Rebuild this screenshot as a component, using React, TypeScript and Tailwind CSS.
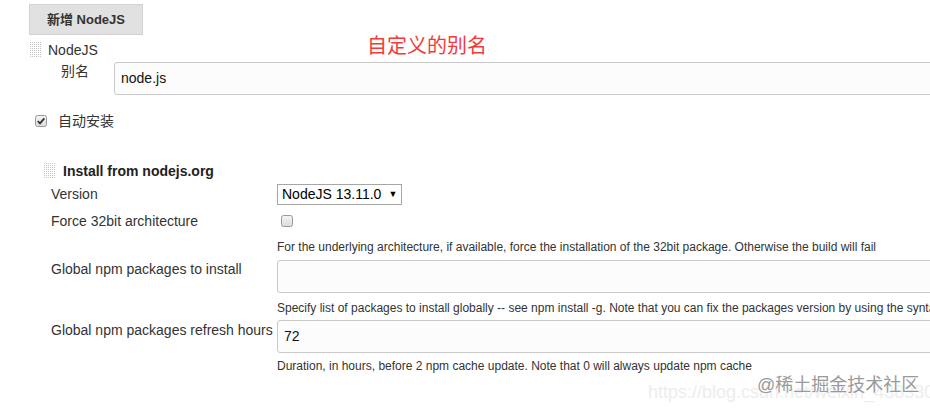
import React from 'react';

const FONT = "font-['Liberation_Sans','Noto_Sans_CJK_SC',sans-serif]";

const DragHandle: React.FC = () => (
  <svg width="11" height="16" viewBox="0 0 11 16" className="shrink-0">
    <defs>
      <pattern id="dots" width="2" height="2" patternUnits="userSpaceOnUse">
        <rect width="1" height="1" fill="#c4c4c4" />
      </pattern>
    </defs>
    <rect width="11" height="16" fill="url(#dots)" />
  </svg>
);

const CheckBox: React.FC<{ checked?: boolean }> = ({ checked }) => (
  <svg width="12" height="12" viewBox="0 0 12 12" className="shrink-0">
    <defs>
      <linearGradient id={checked ? 'cbOn' : 'cbOff'} x1="0" y1="0" x2="0" y2="1">
        <stop offset="0" stopColor="#f4f4f4" />
        <stop offset="1" stopColor="#dcdcdc" />
      </linearGradient>
    </defs>
    <rect x="0.5" y="0.5" width="11" height="11" rx="2" fill={`url(#${checked ? 'cbOn' : 'cbOff'})`} stroke="#9a9a9a" />
    {checked && <path d="M2.8 6.2 L5 8.4 L9.3 3.4" fill="none" stroke="#333" strokeWidth="1.8" />}
  </svg>
);

// inputs run past the right edge of the shot
const TextInput: React.FC<{ value?: string }> = ({ value }) => (
  <div className="shrink-0 w-[900px] h-[33px] border border-[#c9c9c9] rounded-[3px] bg-[#fcfcfc] flex items-center pl-[6px] text-[14px] text-[#111]">
    {value}
  </div>
);

const Desc: React.FC<{ children: React.ReactNode; className?: string }> = ({ children, className }) => (
  <div className={`pl-[277px] text-[12px] leading-[15px] text-[#333] whitespace-nowrap ${className ?? ''}`}>{children}</div>
);

export default function App() {
  return (
    <div className={`relative w-[930px] h-[410px] overflow-hidden bg-white ${FONT}`}>
      <div className="pt-[4px] pl-[29px]">
        <div className="w-[114px] h-[31px] bg-[#e1e1e1] border border-[#d2d2d2] flex items-center justify-center text-[13px] font-bold text-[#333]">
          新增 NodeJS
        </div>
      </div>

      {/* NodeJS installation block */}
      <div className="mt-[7px] pl-[30px] flex items-center h-[16px] gap-[7px] text-[14px] text-[#333]">
        <DragHandle />
        <span>NodeJS</span>
      </div>

      <div className="mt-[4px] flex items-start">
        <div className="shrink-0 w-[114px] pl-[61px] pt-[1px] text-[14px] leading-[16px] text-[#333]">别名</div>
        <TextInput value="node.js" />
      </div>

      <div className="mt-[18px] pl-[35px] flex items-center h-[16px] gap-[11px] text-[14px] text-[#333]">
        <CheckBox checked />
        <span>自动安装</span>
      </div>

      {/* installer */}
      <div className="mt-[34px] pl-[44px] flex items-center h-[16px] gap-[8px] text-[14px] font-bold text-[#222]">
        <DragHandle />
        <span>Install from nodejs.org</span>
      </div>

      <div className="mt-[5px] flex items-center h-[21px] text-[14px] text-[#333]">
        <div className="shrink-0 w-[277px] pl-[51px]">Version</div>
        <div className="w-[125px] h-[21px] border border-[#a6a6a6] flex items-center pl-[4px] text-[14px] text-black bg-white">
          NodeJS 13.11.0
          <span className="ml-[7px] text-[9px]">▼</span>
        </div>
      </div>

      <div className="mt-[8px] flex items-center h-[16px] text-[14px] text-[#333]">
        <div className="shrink-0 w-[281px] pl-[51px]">Force 32bit architecture</div>
        <CheckBox />
      </div>

      <Desc className="mt-[11px]">
        For the underlying architecture, if available, force the installation of the 32bit package. Otherwise the build will fail
      </Desc>

      <div className="mt-[5px] flex items-start">
        <div className="shrink-0 w-[277px] pl-[51px] pt-[1px] text-[14px] leading-[16px] text-[#333] whitespace-nowrap">Global npm packages to install</div>
        <TextInput />
      </div>

      <Desc className="mt-[8px]">
        Specify list of packages to install globally -- see npm install -g. Note that you can fix the packages version by using the syntax `packageName@version`
      </Desc>

      <div className="mt-[4px] flex items-start">
        <div className="shrink-0 w-[277px] pl-[51px] pt-[2px] text-[14px] leading-[16px] text-[#333] whitespace-nowrap">Global npm packages refresh hours</div>
        <TextInput value="72" />
      </div>

      <Desc className="mt-[6px]">Duration, in hours, before 2 npm cache update. Note that 0 will always update npm cache</Desc>

      {/* annotation drawn over the screenshot */}
      <div className="absolute left-[367px] top-[34px] text-[20px] leading-[24px] text-[#f23a3a]">自定义的别名</div>

      {/* watermarks */}
      <div className="absolute left-[648px] top-[381px] text-[18px] leading-[22px] text-[#ededed] whitespace-nowrap">
        https://blog.csdn.net/weixin_43833095
      </div>
      <div className="absolute left-[757px] top-[374px] text-[18px] leading-[22px] text-[#9a9a9a] whitespace-nowrap [text-shadow:0_0_2px_#fff,0_0_2px_#fff]">
        @稀土掘金技术社区
      </div>
    </div>
  );
}
